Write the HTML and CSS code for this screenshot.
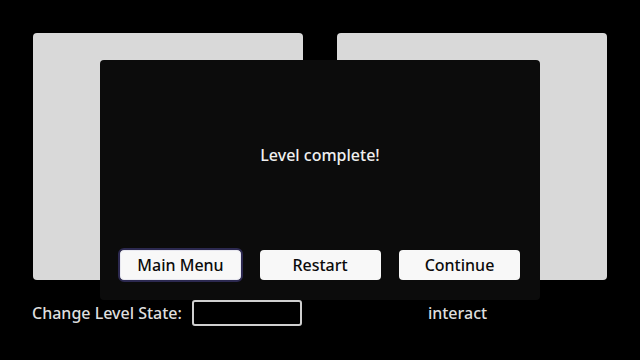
FILE: index.html
```html
<!DOCTYPE html>
<html>
<head>
<meta charset="utf-8">
<link rel="stylesheet" href="styles.css">
</head>
<body>
<div class="page">
  <div class="panels">
    <div class="panel"></div>
    <div class="panel"></div>
  </div>
  <div class="controls">
    <span class="label">Change Level State:</span>
    <div class="state-input"></div>
    <span class="interact">interact</span>
  </div>
  <div class="modal">
    <div class="message">Level complete!</div>
    <div class="buttons">
      <button class="btn focused">Main Menu</button>
      <button class="btn">Restart</button>
      <button class="btn">Continue</button>
    </div>
  </div>
</div>
</body>
</html>
```

FILE: styles.css
```css
html, body {
  margin: 0;
  padding: 0;
  background: #000;
  width: 640px;
  height: 360px;
  overflow: hidden;
  font-family: "Noto Sans", "Open Sans", sans-serif;
}
.page {
  position: relative;
  width: 640px;
  height: 360px;
  padding: 33px 33px 0 33px;
  box-sizing: border-box;
}
.panels {
  display: grid;
  grid-template-columns: 270px 270px;
  column-gap: 34px;
}
.panel {
  height: 247px;
  background: #d9d9d9;
  border-radius: 4px;
}
.controls {
  display: flex;
  align-items: center;
  margin-top: 20px;
  height: 26px;
}
.label {
  color: #dedede;
  font-size: 16px;
  font-weight: 500;
  margin-left: -1px;
}
.state-input {
  width: 106px;
  height: 22px;
  margin-left: 10px;
  border: 2px solid #cfcfcf;
  border-radius: 3px;
  background: #000;
}
.interact {
  color: #dedede;
  font-size: 16px;
  font-weight: 500;
  margin-left: 126px;
}
.modal {
  position: absolute;
  left: 100px;
  top: 60px;
  width: 440px;
  height: 240px;
  box-sizing: border-box;
  padding: 20px;
  background: #0c0c0c;
  border-radius: 4px;
  display: flex;
  flex-direction: column;
}
.message {
  margin-top: 64px;
  text-align: center;
  color: #f0f0f0;
  font-size: 16px;
  font-weight: 500;
  line-height: 22px;
}
.buttons {
  margin-top: auto;
  display: flex;
  justify-content: space-between;
}
.btn {
  width: 121px;
  height: 30px;
  border: none;
  border-radius: 4px;
  background: #f8f8f8;
  color: #0b0b0b;
  font-family: "Noto Sans", "Open Sans", sans-serif;
  font-size: 16px;
  font-weight: 500;
  padding: 0;
}
.btn.focused {
  outline: 2px solid #2c2950;
  outline-offset: 0;
  box-shadow: inset 0 0 0 1px #e8e8f0;
}
```
